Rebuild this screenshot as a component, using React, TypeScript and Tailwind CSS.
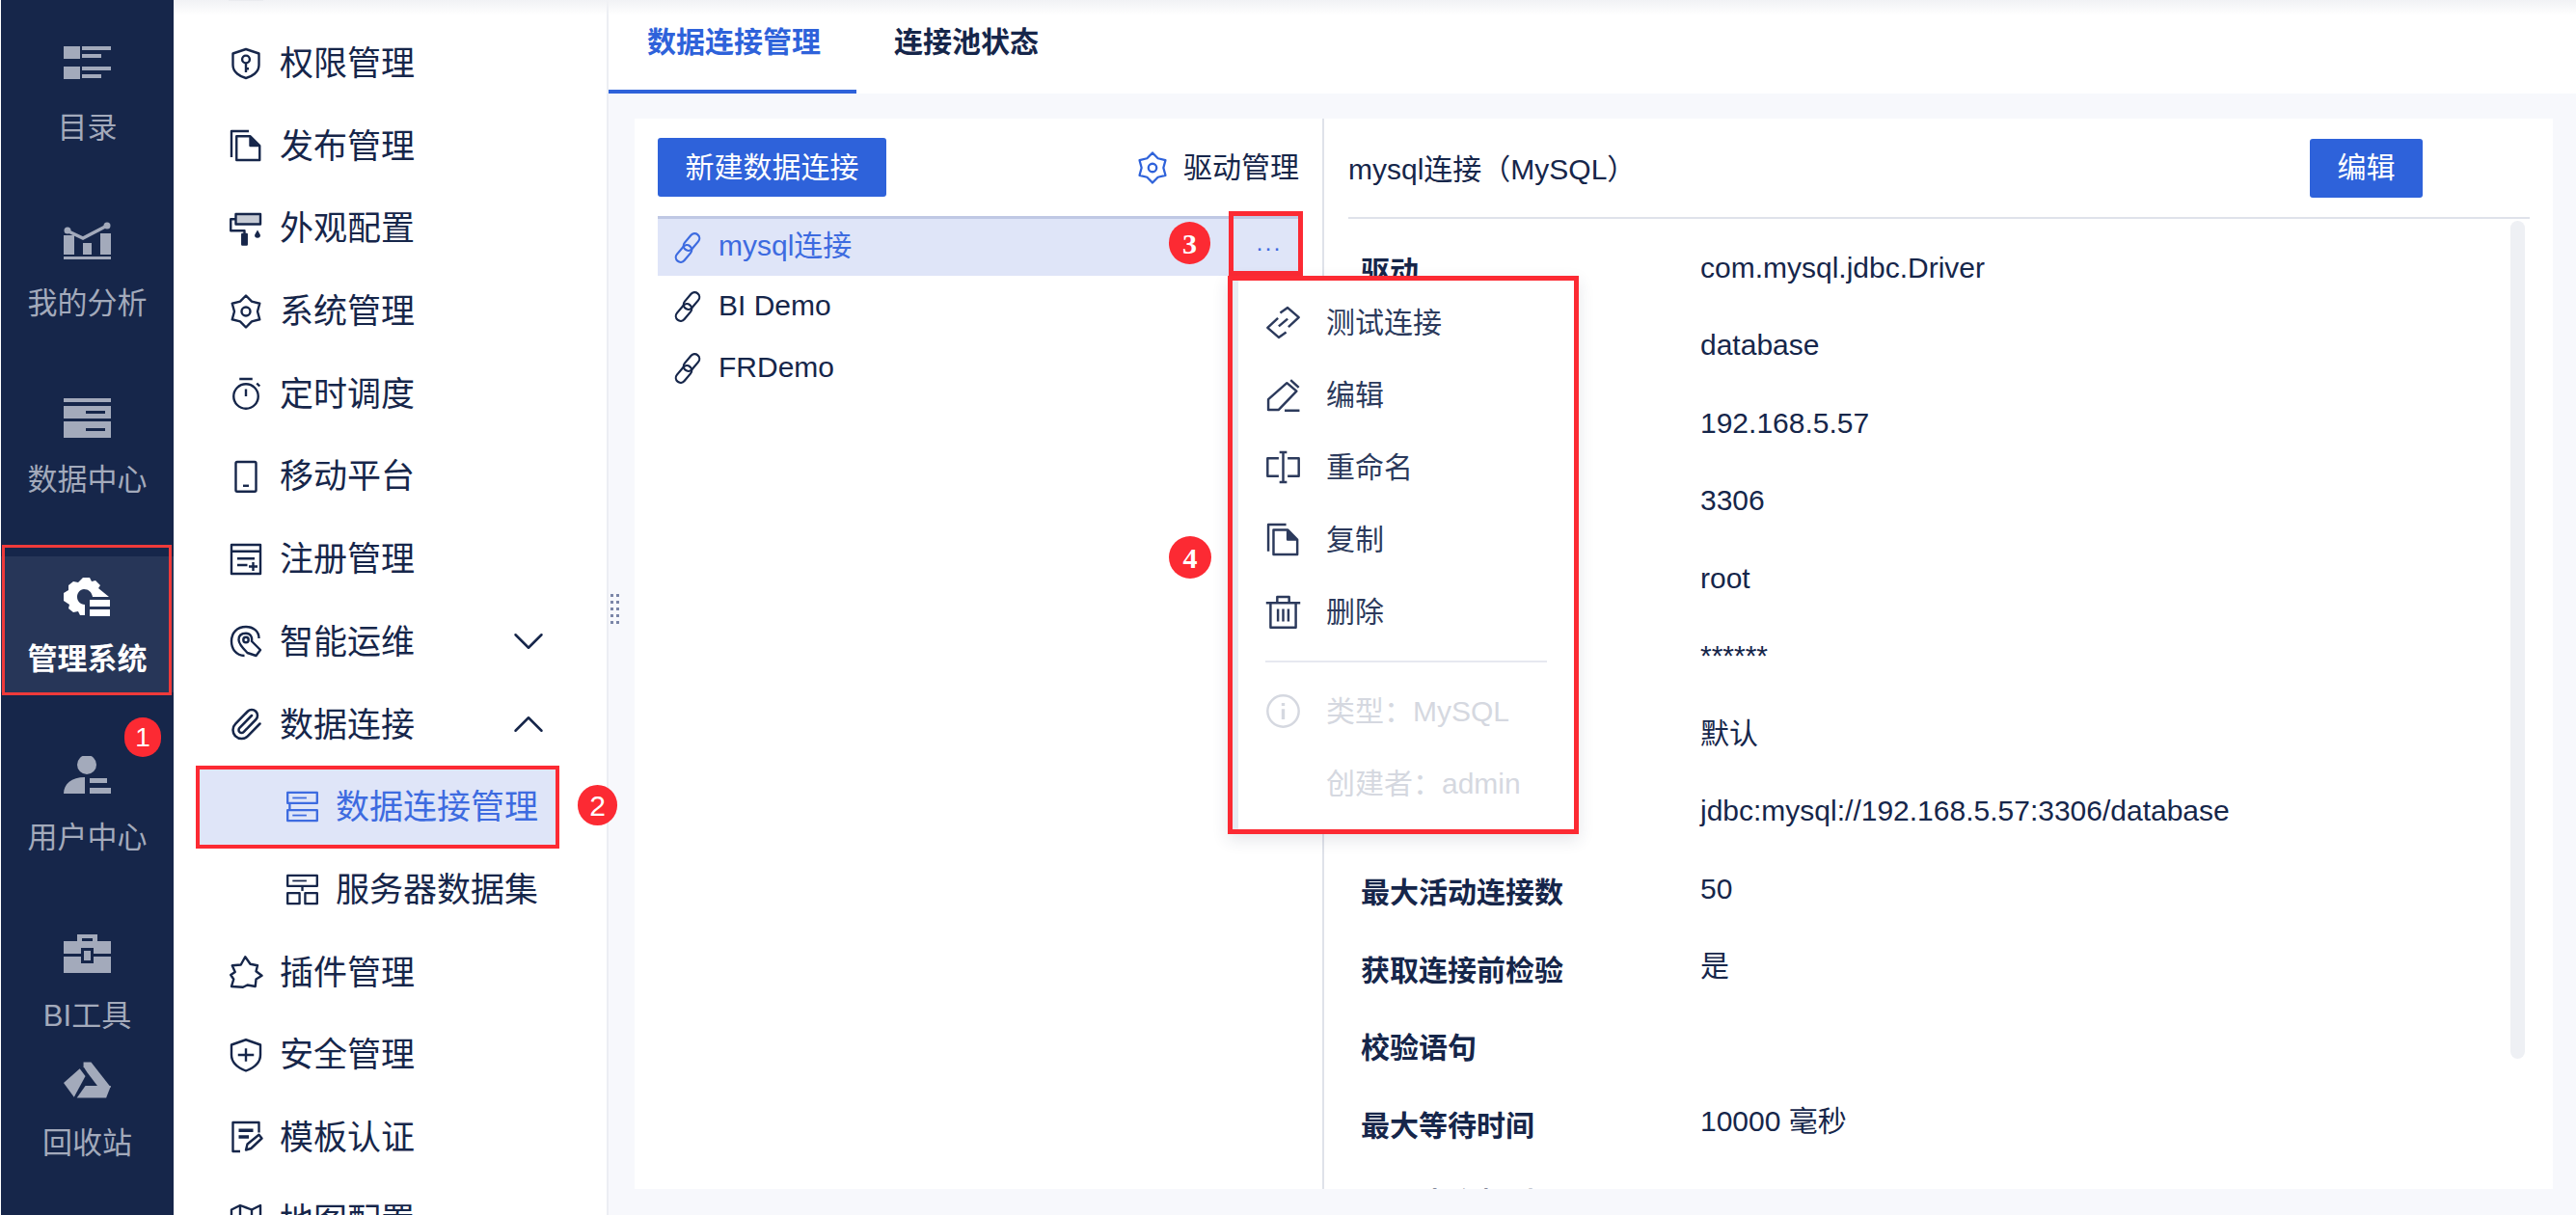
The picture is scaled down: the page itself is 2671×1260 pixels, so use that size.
import type { ReactNode } from 'react';
import { ChevronDown, ChevronUp, Paperclip } from 'lucide-react';

const fontStack = "font-['Liberation_Sans','Noto_Sans_CJK_SC',sans-serif]";

function Ico({ children, className = 'w-9 h-9' }: { children: ReactNode; className?: string }) {
  return (
    <svg
      viewBox="0 0 24 24"
      fill="none"
      stroke="currentColor"
      strokeWidth={1.6}
      strokeLinejoin="round"
      className={`shrink-0 ${className}`}
    >
      {children}
    </svg>
  );
}

const gearPoints = '12,1 16,5.1 21.5,6.5 20,12 21.5,17.5 16,18.9 12,23 8,18.9 2.5,17.5 4,12 2.5,6.5 8,5.1';

const navIcons: Record<string, ReactNode> = {
  shield: (
    <>
      <path d="M12 2 21 5V13C21 18 16 21 12 22 8 21 3 18 3 13V5Z" />
      <circle cx="12" cy="9" r="2.6" />
      <path d="M12 11.5V18M12 15.5H14" />
    </>
  ),
  files: (
    <>
      <path d="M2 20V2H14" />
      <path d="M5.5 5.5H15L21.5 12V22H5.5Z" />
      <path d="M15 6V12H21" fill="currentColor" />
    </>
  ),
  roller: (
    <>
      <rect x="5" y="2" width="17" height="7" fill="#c7cbd4" />
      <path d="M5 5.5H1.5V13.5H11V16" />
      <rect x="9.5" y="16" width="3" height="7" fill="currentColor" />
      <path d="M20 13 22 16.5A2 2 0 1 1 18 16.5Z" fill="currentColor" stroke="none" />
    </>
  ),
  gear: (
    <>
      <polygon points={gearPoints} />
      <circle cx="12" cy="12" r="3" />
    </>
  ),
  timer: (
    <>
      <circle cx="12" cy="14" r="8.5" />
      <path d="M7.5 2H16.5M12 9V14M19.5 5 21.5 7" />
    </>
  ),
  mobile: (
    <>
      <rect x="5" y="2" width="14" height="20.5" rx="1" />
      <path d="M10 18.5H14" />
    </>
  ),
  form: (
    <>
      <rect x="2" y="2" width="20" height="20" />
      <path d="M2 6.5H22M6 11.5H18M6 16H13M17 14V20M14 17H20" />
    </>
  ),
  wrench: (
    <>
      <path d="M11 22C5 22 2 17 2 12 2 6 6 2 12 2 17 2 21 5 21 10" />
      <path d="M13 20C10 17 7 14 7 11 7 8 9 6.5 12 6.5 15 6.5 16.5 9 16 12L22 18 19 22Z" />
      <circle cx="12" cy="11" r="1.8" />
    </>
  ),
  puzzle: <path d="M11.5 1.5 15 6.5 20 7.5 19 11.5 23 14.5 19 17 18.5 22 13 21 10 22.5 2 22 3.5 17 1.5 14 4.5 12 2.5 7.5 8.5 7Z" />,
  shieldPlus: (
    <>
      <path d="M12 1.5 22 5V12C22 18 16 21.5 12 23 8 21.5 2 18 2 12V5Z" />
      <path d="M12 7.5V16.5M6.5 12H17.5" />
    </>
  ),
  filePen: (
    <>
      <path d="M8 22H3V2H21V9" />
      <path d="M7 7.5H17M7 12H14" strokeWidth={2.4} />
      <path d="M12 21 13 17 21 10.5 23 13 15.5 20Z" />
    </>
  ),
  map: (
    <>
      <path d="M2 5 8 2 16 5 22 2V20L16 22 8 20 2 22Z" />
      <path d="M8 2V20M16 5V22" />
    </>
  ),
};

function LinkIcon() {
  return (
    <svg viewBox="0 0 32 34" fill="none" stroke="currentColor" strokeWidth={2.2} className="w-8 h-[34px] shrink-0">
      <rect x="15" y="1" width="10" height="20" rx="5" transform="rotate(40 20 11)" />
      <rect x="7" y="13" width="10" height="20" rx="5" transform="rotate(40 12 23)" />
    </svg>
  );
}

function Server({ split }: { split?: boolean }) {
  return (
    <Ico className="w-[35px] h-[35px]">
      <rect x="1.5" y="2" width="21" height="7.5" />
      <path d="M5 5.8H15" strokeWidth={1.2} />
      {split ? (
        <>
          <path d="M12 9.5V13" />
          <rect x="1.5" y="14.5" width="8.5" height="7.5" />
          <rect x="14" y="14.5" width="8.5" height="7.5" />
        </>
      ) : (
        <>
          <path d="M3 9.5V14" />
          <rect x="1.5" y="14.5" width="21" height="7.5" />
          <path d="M5 18.2H15" strokeWidth={1.2} />
        </>
      )}
    </Ico>
  );
}

const railIcons: Record<string, ReactNode> = {
  catalog: (
    <g fill="currentColor">
      <rect x="0" y="0" width="17" height="13" />
      <rect x="0" y="21" width="17" height="13" />
      <rect x="19" y="0" width="30" height="4" />
      <rect x="19" y="8" width="20" height="4" />
      <rect x="19" y="21" width="30" height="4" />
      <rect x="19" y="29" width="20" height="4" />
    </g>
  ),
  chart: (
    <g fill="currentColor">
      <path d="M3 9 20 17 45 4" stroke="currentColor" strokeWidth={3.5} fill="none" />
      <circle cx="4" cy="9" r="3.5" />
      <circle cx="45" cy="4" r="3.5" />
      <rect x="0" y="14" width="11" height="20" />
      <rect x="20" y="22" width="9" height="12" />
      <rect x="38" y="12" width="11" height="22" />
      <rect x="0" y="36" width="49" height="3" />
    </g>
  ),
  data: (
    <g fill="currentColor">
      <rect x="0" y="0" width="49" height="4" />
      <path d="M0 8H49V21H23V16H43V13H23V21H0Z" fillRule="evenodd" />
      <path d="M0 24H49V41H0ZM23 31V34H43V31Z" fillRule="evenodd" />
    </g>
  ),
  manage: (
    <g fill="currentColor">
      <path d="M20 0H27L29 4 33 3 38 8 36 11 47 20 30 20C29 15 26 12 21 12 17 12 14 16 14 20 14 24 17 28 22 28V39H17L15 35 10 36 5 32 6 28 0 24V16L5 13 5 8 10 4 15 5Z" />
      <rect x="27" y="23" width="21" height="7" />
      <rect x="27" y="33" width="21" height="7" />
    </g>
  ),
  user: (
    <g fill="currentColor">
      <circle cx="24" cy="9" r="10" />
      <path d="M0 39C0 29 8 22 22 22V39Z" />
      <rect x="27" y="23" width="18" height="5" />
      <rect x="27" y="33" width="22" height="6" />
    </g>
  ),
  tool: (
    <g fill="currentColor">
      <path d="M14 0H35V7H30V4H19V7H14Z" />
      <rect x="0" y="7" width="49" height="13" />
      <rect x="0" y="23" width="49" height="17" />
      <rect x="18" y="14" width="13" height="16" fill="#16264a" />
      <rect x="21" y="17" width="7" height="10" />
    </g>
  ),
  recycle: (
    <g fill="currentColor">
      <path d="M21 0H29L50 27H37L25 11 21 5Z" />
      <path d="M17 7 23 15 11 37 0 22Z" />
      <path d="M23 25H50L45 38H14Z" />
    </g>
  ),
};

const railItems = [
  { key: 'catalog', label: '目录', box: '0 0 49 34', h: 'h-[34px]', mt: 'mt-[26px]' },
  { key: 'chart', label: '我的分析', box: '0 0 49 39', h: 'h-[39px]', mt: 'mt-[41px]' },
  { key: 'data', label: '数据中心', box: '0 0 49 41', h: 'h-[41px]', mt: 'mt-[42px]' },
  { key: 'manage', label: '管理系统', box: '0 0 49 40', h: 'h-[40px]', mt: 'mt-[45px]', active: true },
  { key: 'user', label: '用户中心', box: '0 0 49 39', h: 'h-[39px]', mt: 'mt-[44px]' },
  { key: 'tool', label: 'BI工具', box: '0 0 49 40', h: 'h-[40px]', mt: 'mt-[44px]' },
  { key: 'recycle', label: '回收站', box: '0 0 50 38', h: 'h-[38px]', mt: 'mt-[-9px]' },
];

function RailItem({ item }: { item: (typeof railItems)[number] }) {
  return (
    <div
      className={`${item.mt} h-[141px] shrink-0 flex flex-col items-center ${
        item.active ? 'bg-[#273658] text-white font-semibold' : 'text-[#a3aabb]'
      }`}
    >
      <div className="h-[87px] pt-[22px] flex justify-center">
        <svg viewBox={item.box} className={`w-[49px] ${item.h}`}>
          {railIcons[item.key]}
        </svg>
      </div>
      <span className="text-[31px] leading-[40px] whitespace-nowrap">{item.label}</span>
    </div>
  );
}

function NavRow({ icon, label, chevron }: { icon: ReactNode; label: string; chevron?: 'up' | 'down' }) {
  return (
    <div className="h-[85.7px] shrink-0 flex items-center pl-[57px] pr-[54px] text-[#16264a]">
      <div className="w-[53px] shrink-0 flex">{icon}</div>
      <span className="text-[35px] leading-none whitespace-nowrap">{label}</span>
      {chevron === 'down' && <ChevronDown className="ml-auto w-[54px] h-[54px]" strokeWidth={1.1} />}
      {chevron === 'up' && <ChevronUp className="ml-auto w-[54px] h-[54px]" strokeWidth={1.1} />}
    </div>
  );
}

function SubRow({ label, active }: { label: string; active?: boolean }) {
  return (
    <div
      className={`h-[85.7px] shrink-0 flex items-center ml-[23px] mr-[49px] pl-[89px] ${
        active ? 'bg-[#dfe5f8] text-[#3d6be0] border-4 border-[#fc2a33]' : 'text-[#16264a] border-4 border-transparent'
      }`}
    >
      <div className="w-[52px] shrink-0 flex">
        <Server split={!active} />
      </div>
      <span className="text-[35px] leading-none whitespace-nowrap">{label}</span>
    </div>
  );
}

function Badge({ n, className, serif }: { n: number; className: string; serif?: boolean }) {
  return (
    <div
      className={`absolute z-10 rounded-full flex items-center justify-center text-white bg-[#fc2a33] ${
        serif ? "font-['Liberation_Serif',serif] font-bold" : 'font-normal'
      } ${className}`}
    >
      {n}
    </div>
  );
}

// labels from 数据库 down to URL sit under the popup menu in the picture
const details = [
  { name: '驱动', value: 'com.mysql.jdbc.Driver' },
  { name: '', value: 'database' },
  { name: '', value: '192.168.5.57' },
  { name: '', value: '3306' },
  { name: '', value: 'root' },
  { name: '', value: '******' },
  { name: '', value: '默认' },
  { name: '', value: 'jdbc:mysql://192.168.5.57:3306/database' },
  { name: '最大活动连接数', value: '50' },
  { name: '获取连接前检验', value: '是' },
  { name: '校验语句', value: '' },
  { name: '最大等待时间', value: '10000 毫秒' },
  { name: 'SQL查询超时', value: '' },
];

const menuItems: { label: string; icon: ReactNode }[] = [
  {
    label: '测试连接',
    icon: (
      <>
        <path d="M10 5.5 15 2 22.5 8.5 15.5 15" />
        <path d="M14 18.5 9 22 1.5 15.5 8.5 9" />
        <path d="M9 14.5 15 9.5" />
      </>
    ),
  },
  {
    label: '编辑',
    icon: (
      <>
        <path d="M2 22V15L14.5 4 21 9.5 9 22Z" />
        <path d="M17 2 22.5 7M13 22.5H23" />
      </>
    ),
  },
  {
    label: '重命名',
    icon: <path d="M9 6H1.5V18H9M15 6H22.5V18H15M12 2V22M9.5 2H14.5M9.5 22H14.5" />,
  },
  { label: '复制', icon: navIcons.files },
  {
    label: '删除',
    icon: <path d="M.5 6H23.5M8 6V2H16V6M3.5 6V22.5H20.5V6M8.5 10V18.5M12 10V18.5M15.5 10V18.5" />,
  },
];

export default function App() {
  return (
    <div className={`relative flex w-[2671px] h-[1260px] overflow-hidden bg-white ${fontStack}`}>
      {/* left rail */}
      <aside className="relative w-[180px] shrink-0 flex flex-col bg-[#16264a] border-l border-white overflow-hidden">
        {railItems.map((item) => (
          <RailItem key={item.key} item={item} />
        ))}
        <div className="absolute left-[1px] top-[565px] w-[176px] h-[156px] border-[3px] border-[#ef3a3a]" />
        <Badge n={1} className="left-[128px] top-[744px] w-[38px] h-[41px] text-[28px] bg-[#f44040]" />
      </aside>

      {/* menu column */}
      <nav className="w-[451px] shrink-0 flex flex-col border-r-2 border-[#eceef3] overflow-hidden">
        <div className="mt-[-63px]">
          <NavRow icon={<div className="w-9 h-[42px] border-b-2 border-[#16264a]" />} label="" />
        </div>
        <NavRow icon={<Ico>{navIcons.shield}</Ico>} label="权限管理" />
        <NavRow icon={<Ico>{navIcons.files}</Ico>} label="发布管理" />
        <NavRow icon={<Ico>{navIcons.roller}</Ico>} label="外观配置" />
        <NavRow icon={<Ico>{navIcons.gear}</Ico>} label="系统管理" />
        <NavRow icon={<Ico>{navIcons.timer}</Ico>} label="定时调度" />
        <NavRow icon={<Ico>{navIcons.mobile}</Ico>} label="移动平台" />
        <NavRow icon={<Ico>{navIcons.form}</Ico>} label="注册管理" />
        <NavRow icon={<Ico>{navIcons.wrench}</Ico>} label="智能运维" chevron="down" />
        <NavRow icon={<Paperclip className="w-9 h-9" strokeWidth={1.7} />} label="数据连接" chevron="up" />
        <SubRow label="数据连接管理" active />
        <SubRow label="服务器数据集" />
        <NavRow icon={<Ico>{navIcons.puzzle}</Ico>} label="插件管理" />
        <NavRow icon={<Ico>{navIcons.shieldPlus}</Ico>} label="安全管理" />
        <NavRow icon={<Ico>{navIcons.filePen}</Ico>} label="模板认证" />
        <NavRow icon={<Ico>{navIcons.map}</Ico>} label="地图配置" />
      </nav>

      {/* main */}
      <main className="relative flex-1 min-w-0 flex flex-col bg-[#f7f8fc]">
        <div className="h-[97px] shrink-0 flex bg-white">
          <div className="w-[257px] pl-10 pt-[26px] border-b-4 border-[#2e62da] text-[#2e62da] text-[30px] leading-9 font-semibold">
            数据连接管理
          </div>
          <div className="pl-[39px] pt-[26px] text-[#16264a] text-[30px] leading-9 font-semibold">连接池状态</div>
        </div>

        <div className="absolute left-[2px] top-[616px] grid grid-cols-2 gap-x-[3px] gap-y-[4px]">
          {Array.from({ length: 10 }, (_, i) => (
            <span key={i} className="w-[3px] h-[3px] bg-[#7b86a8]" />
          ))}
        </div>

        <div className="flex-1 min-h-0 pl-[27px] pr-[24px] pt-[26px] pb-[27px]">
          <div className="relative h-full flex bg-white text-[#16264a]">
            {/* connection list */}
            <section className="w-[715px] shrink-0 pl-6 pr-[22px] pt-5 border-r-2 border-[#dfe2ea]">
              <div className="flex items-center justify-between h-[61px]">
                <button className="w-[237px] h-[61px] rounded-[3px] bg-[#2e62da] text-white text-[30px] leading-none">
                  新建数据连接
                </button>
                <div className="flex items-center gap-[15px] pr-[2px] text-[30px]">
                  <Ico className="w-[34px] h-[36px] text-[#2e62da]">
                    <polygon points={gearPoints} />
                    <circle cx="12" cy="12" r="3" />
                  </Ico>
                  <span>驱动管理</span>
                </div>
              </div>
              <div className="mt-5 flex flex-col">
                <div className="h-[62px] flex items-center pl-[15px] bg-[#dfe5f8] border-t-[3px] border-[#bfc8e4] text-[#3d6be0]">
                  <LinkIcon />
                  <span className="ml-4 pb-[5px] text-[30px]">mysql连接</span>
                  <span className="ml-auto w-[67px] text-center text-[24px] leading-none tracking-[1px]">···</span>
                </div>
                <div className="h-[64px] flex items-center pl-[15px]">
                  <LinkIcon />
                  <span className="ml-4 pb-[3px] text-[30px]">BI Demo</span>
                </div>
                <div className="h-[64px] flex items-center pl-[15px]">
                  <LinkIcon />
                  <span className="ml-4 pb-[4px] text-[30px]">FRDemo</span>
                </div>
              </div>
            </section>

            {/* detail */}
            <section className="relative flex-1 min-w-0 pl-[25px] pr-[24px] overflow-hidden flex flex-col">
              <div className="h-[104px] shrink-0 flex items-center justify-between pr-[111px] pt-[2px] border-b-2 border-[#dfe2ea]">
                <span className="text-[30px]">mysql连接（MySQL）</span>
                <button className="w-[117px] h-[61px] mt-[-2px] rounded-[3px] bg-[#2e62da] text-white text-[30px] leading-none">
                  编辑
                </button>
              </div>
              <div className="pl-[13px] pt-[10px] flex flex-col">
                {details.map(({ name, value }) => (
                  <div key={value + name} className="h-[80.5px] shrink-0 flex items-center">
                    <span className="w-[352px] shrink-0 pt-[9px] text-[30px] font-semibold whitespace-nowrap">{name}</span>
                    <span className="text-[30px] whitespace-nowrap">{value}</span>
                  </div>
                ))}
              </div>
              <div className="absolute right-[29px] top-[106px] bottom-[135px] w-[15px] rounded-full bg-[#eef0f4]" />
            </section>

            {/* annotated overlays */}
            <div className="absolute left-[616px] top-[96px] w-[77px] h-[67px] border-[5px] border-[#fc2a33]" />
            <Badge n={3} serif className="left-[554px] top-[107px] w-[43px] h-[44px] text-[30px]" />
            <Badge n={4} serif className="left-[554px] top-[433px] w-[44px] h-[44px] text-[30px]" />

            <div className="absolute left-[615px] top-[163px] w-[364px] h-[579px] bg-white border-[5px] border-[#fc2a33] shadow-[0_6px_16px_rgba(40,50,80,0.12)]">
              <div className="h-full border-l-[6px] border-[#e8ebf3] pl-[28px] pr-[28px] pt-[6px] flex flex-col">
                {menuItems.map((item) => (
                  <div key={item.label} className="h-[75px] shrink-0 flex items-center text-[#2c3a5c]">
                    <Ico className="w-[37px] h-[37px]">{item.icon}</Ico>
                    <span className="ml-[26px] text-[30px] text-[#2c3a5c]">{item.label}</span>
                  </div>
                ))}
                <div className="mt-[13px] h-[2px] shrink-0 bg-[#e6e8f0]" />
                <div className="mt-[13px] h-[75px] shrink-0 flex items-center text-[#d5d8e0]">
                  <Ico className="w-[37px] h-[37px]">
                    <circle cx="12" cy="12" r="10.5" />
                    <path d="M12 10.5V17.5M12 6.5V8.5" strokeWidth={2.2} />
                  </Ico>
                  <span className="ml-[26px] text-[30px] whitespace-nowrap">类型：MySQL</span>
                </div>
                <div className="h-[75px] shrink-0 flex items-center pl-[63px] text-[#d5d8e0] text-[30px] whitespace-nowrap">
                  创建者：admin
                </div>
              </div>
            </div>
          </div>
        </div>
      </main>

      <Badge n={2} className="left-[599px] top-[814px] w-[41px] h-[42px] text-[30px]" />

      <div className="absolute left-[180px] right-0 top-0 h-[16px] bg-gradient-to-b from-[#f1f2f5] to-transparent" />
    </div>
  );
}
